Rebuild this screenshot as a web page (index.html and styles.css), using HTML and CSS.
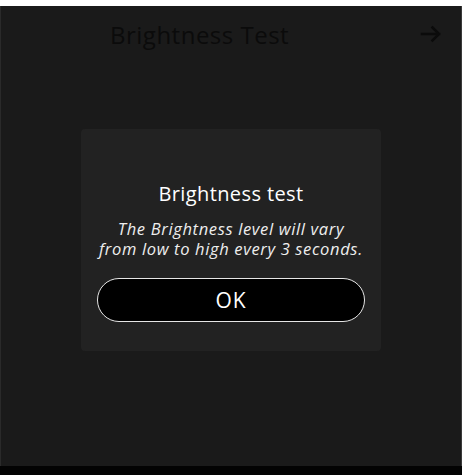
FILE: index.html
```html
<!DOCTYPE html>
<html>
<head>
<meta charset="utf-8">
<link rel="stylesheet" href="styles.css">
</head>
<body>
<div class="topbar"></div>
<div class="screen">
  <header class="header">
    <h1 class="title">Brightness Test</h1>
    <svg class="arrow" width="24" height="24" viewBox="0 0 24 24" fill="none" stroke="#0b0b0b" stroke-width="2.6" stroke-linecap="square"><path d="M3 12h17M13.5 5.5l6.5 6.5-6.5 6.5"/></svg>
  </header>
  <div class="overlay">
    <div class="modal">
      <h2 class="modal-title">Brightness test</h2>
      <p class="modal-text"><span class="line">The Brightness level will vary</span><span class="line">from low to high every 3 seconds.</span></p>
      <button class="ok">OK</button>
    </div>
  </div>
</div>
<div class="bottombar"></div>
</body>
</html>
```
FILE: styles.css
```css
html, body {
  margin: 0;
  padding: 0;
  background: #050505;
  font-family: "Open Sans", "Noto Sans", sans-serif;
  overflow: hidden;
}
.topbar {
  height: 6px;
  background: #ffffff;
}
.screen {
  position: relative;
  height: 460px;
  background: #1a1a1a;
  border-left: 1px solid #2a2a2a;
  border-right: 1px solid #3a3a3a;
  box-sizing: border-box;
}
.header {
  display: flex;
  align-items: center;
  height: 56px;
  padding: 0 18px 0 109px;
}
.title {
  margin: 0;
  flex: 1;
  font-weight: 400;
  font-size: 24px;
  color: #0b0b0b;
  letter-spacing: 0.5px;
}
.arrow { display: block; }
.overlay {
  position: absolute;
  inset: 0;
  display: flex;
  align-items: center;
  justify-content: center;
  padding-top: 8px;
}
.modal {
  width: 300px;
  height: 222px;
  box-sizing: border-box;
  background: #222222;
  border-radius: 4px;
  padding: 52px 16px 0;
  display: flex;
  flex-direction: column;
  align-items: center;
}
.modal-title {
  margin: 0;
  font-weight: 400;
  font-size: 20px;
  color: #ffffff;
  line-height: 26px;
  letter-spacing: 0.4px;
}
.modal-text {
  margin: 12px 0 0;
  display: flex;
  flex-direction: column;
  align-items: center;
  gap: 0;
  font-style: italic;
  font-size: 16.5px;
  line-height: 20px;
  color: #eeeeee;
  text-align: center;
  letter-spacing: 0.65px;
  white-space: nowrap;
}
.line { display: block; }
.ok {
  margin-top: 19px;
  width: 268px;
  height: 44px;
  background: #000000;
  border: 1px solid #e6e6e6;
  border-radius: 22px;
  color: #ffffff;
  font-family: inherit;
  font-size: 21px;
  letter-spacing: 1px;
}
.bottombar {
  height: 9px;
  background: #030303;
}
```
